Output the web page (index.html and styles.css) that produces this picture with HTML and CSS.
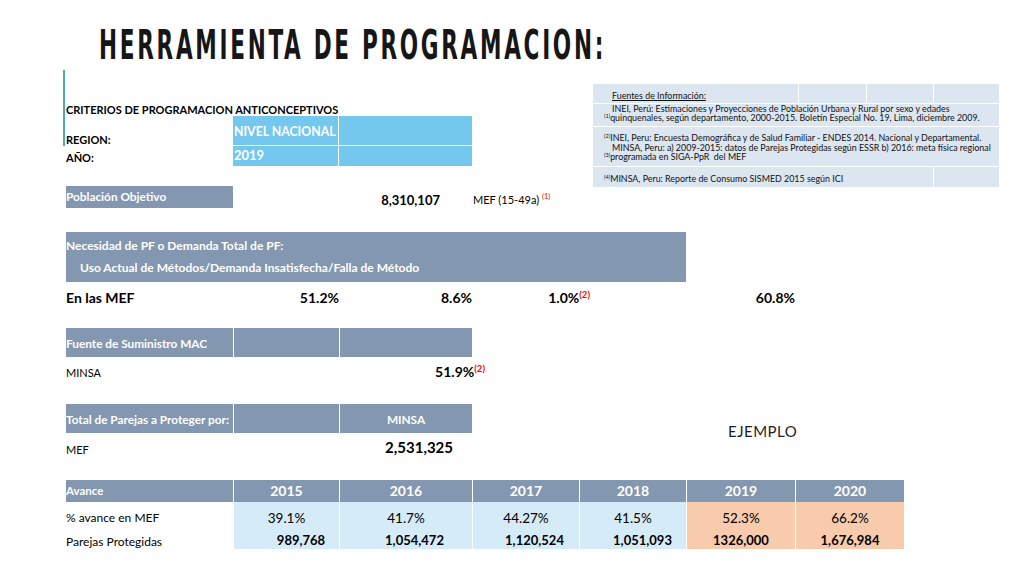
FILE: index.html
```html
<!DOCTYPE html>
<html lang="es">
<head>
<meta charset="utf-8">
<title>Herramienta de Programacion</title>
<link rel="stylesheet" href="styles.css">
</head>
<body>
<div class="slide">
  <header class="title-bar">
    <h1 class="title"><span class="title-text">HERRAMIENTA DE PROGRAMACION:</span></h1>
  </header>

  <div class="top">
    <div class="criteria">
      <div class="criteria-head">CRITERIOS DE PROGRAMACION ANTICONCEPTIVOS</div>
      <div class="region-grid">
        <div class="crit-lbl region-lbl">REGION:</div>
        <div class="blue-cell blue-top blue-first">NIVEL NACIONAL</div>
        <div class="blue-cell blue-top"></div>
        <div class="crit-lbl year-lbl">AÑO:</div>
        <div class="blue-cell blue-first year-val">2019</div>
        <div class="blue-cell"></div>
      </div>
    </div>

    <div class="sources">
      <div class="src-cell src-r1"><span class="src-line ind"><u>Fuentes de Información:</u></span></div>
      <div class="src-cell"></div>
      <div class="src-cell"></div>
      <div class="src-cell"></div>
      <div class="src-cell src-span4 src-r2">
        <div class="src-line ind">INEI, Perú: Estimaciones y Proyecciones de Población Urbana y Rural por sexo y edades</div>
        <div class="src-line"><span class="ssup">(1)</span>quinquenales,  según departamento, 2000-2015. Boletín Especial No. 19, Lima, diciembre 2009.</div>
      </div>
      <div class="src-cell src-span4 src-r3">
        <div class="src-line"><span class="ssup">(2)</span>INEI, Peru: Encuesta Demográfica y de Salud Familiar - ENDES 2014. Nacional y Departamental.</div>
        <div class="src-line ind">MINSA, Peru: a) 2009-2015: datos de Parejas Protegidas según ESSR b) 2016: meta física regional</div>
        <div class="src-line"><span class="ssup">(3)</span>programada en SIGA-PpR&nbsp; del MEF</div>
      </div>
      <div class="src-cell src-span3 src-r4">
        <div class="src-line"><span class="ssup">(4)</span>MINSA, Peru: Reporte de Consumo SISMED 2015 según ICI</div>
      </div>
      <div class="src-cell"></div>
    </div>
  </div>

  <section class="grid row-pob">
    <div class="hd">Población Objetivo</div>
    <div></div>
    <div class="pob-num">8,310,107</div>
    <div class="note">MEF (15-49a) <span class="ref">(1)</span></div>
  </section>

  <section class="grid row-nec">
    <div class="hd nec-box">
      <div class="nec-line">Necesidad de PF o Demanda Total de PF:</div>
      <div class="nec-line nec-indent">Uso Actual de Métodos/Demanda Insatisfecha/Falla de Método</div>
    </div>
  </section>

  <section class="grid row-mef">
    <div class="lbl-big">En las MEF</div>
    <div class="pct">51.2%</div>
    <div class="pct">8.6%</div>
    <div class="pct pct-over">1.0%<span class="ref ref-big">(2)</span></div>
    <div></div>
    <div class="pct">60.8%</div>
  </section>

  <section class="grid row-bar">
    <div class="hd bar-txt">Fuente de Suministro MAC</div>
    <div class="hd sep"></div>
    <div class="hd sep"></div>
  </section>

  <section class="grid row-minsa">
    <div class="lbl minsa-lbl">MINSA</div>
    <div></div>
    <div class="pct minsa-pct">51.9%<span class="ref ref-big ref-out">(2)</span></div>
  </section>

  <section class="grid row-total">
    <div class="hd bar-txt tot-c1">Total de Parejas a Proteger por:</div>
    <div class="hd sep tot-c2"></div>
    <div class="hd sep bar-txt center tot-c3">MINSA</div>
    <div class="ejemplo">EJEMPLO</div>
    <div class="lbl mef-lbl">MEF</div>
    <div class="total-num">2,531,325</div>
  </section>

  <section class="grid tbl">
    <div class="hd tbl-hd">Avance</div>
    <div class="hd sep yr">2015</div>
    <div class="hd sep yr">2016</div>
    <div class="hd sep yr">2017</div>
    <div class="hd sep yr">2018</div>
    <div class="hd sep yr">2019</div>
    <div class="hd sep yr">2020</div>

    <div class="lbl tl1">% avance en MEF</div>
    <div class="v1 fb sep">39.1%</div>
    <div class="v1 fb sep">41.7%</div>
    <div class="v1 fb sep">44.27%</div>
    <div class="v1 fb sep">41.5%</div>
    <div class="v1 fp sep">52.3%</div>
    <div class="v1 fp sep">66.2%</div>

    <div class="lbl tl2">Parejas Protegidas</div>
    <div class="v2 fb sep s15">989,768</div>
    <div class="v2 fb sep s16">1,054,472</div>
    <div class="v2 fb sep s17">1,120,524</div>
    <div class="v2 fb sep s18">1,051,093</div>
    <div class="v2 fp sep">1326,000</div>
    <div class="v2 fp sep">1,676,984</div>
  </section>
</div>
</body>
</html>
```

FILE: styles.css
```css
* { box-sizing: border-box; margin: 0; padding: 0; }

body {
  margin: 0;
  background: #ffffff;
  font-family: "Lato", "Liberation Sans", sans-serif;
  color: #000000;
}

.slide {
  width: 1024px;
  height: 576px;
  overflow: hidden;
  background: #ffffff;
}

/* ---------- title ---------- */
.title-bar {
  height: 70px;
  padding: 25px 0 0 99px;
}
.title {
  font-family: "DejaVu Sans Condensed", "DejaVu Sans", sans-serif;
  font-stretch: condensed;
  font-weight: bold;
  font-size: 40px;
  line-height: 40px;
  color: #161616;
  white-space: nowrap;
}
.title-text {
  display: inline-block;
  letter-spacing: 4.5px;
  transform: scaleX(0.6);
  transform-origin: 0 0;
}

/* ---------- top block ---------- */
.top {
  display: flex;
  align-items: flex-start;
  height: 116px;
}
.criteria {
  position: relative;
  margin-left: 63px;
  width: 409px;
  padding-left: 3px;
}
.criteria::before {
  content: "";
  position: absolute;
  left: 0;
  top: 0;
  width: 2px;
  height: 76px;
  background: #4ea6c6;
}
.criteria-head {
  margin-top: 33px;
  height: 13px;
  font-size: 11px;
  line-height: 13px;
  font-weight: bold;
  white-space: nowrap;
}
.region-grid {
  display: grid;
  grid-template-columns: 167px 106px 133px;
  grid-template-rows: 30px 20px;
}
.crit-lbl {
  font-size: 11px;
  line-height: 13px;
  font-weight: bold;
}
.region-lbl { align-self: end; }
.year-lbl { padding-top: 5px; }

.blue-cell {
  background: #74c8ee;
  color: #ffffff;
  font-weight: bold;
  font-size: 12.3px;
  line-height: 15px;
  padding-left: 1px;
  white-space: nowrap;
  overflow: hidden;
}
.blue-top { border-bottom: 1px solid #ffffff; padding-top: 8px; }
.blue-first { border-right: 1px solid #ffffff; }
.year-val { padding-top: 2px; font-size: 13px; }

/* ---------- sources ---------- */
.sources {
  margin: 14px 0 0 121px;
  width: 403px;
  display: grid;
  grid-template-columns: 205px 67px 66px 65px;
  grid-template-rows: 19px 22px 39px 20px;
  gap: 1px;
  background: #ffffff;
  font-size: 8.9px;
  color: #111111;
}
.src-cell {
  background: #dce6f1;
  padding-left: 11px;
  white-space: nowrap;
}
.src-span4 { grid-column: 1 / 5; }
.src-span3 { grid-column: 1 / 4; }
.src-line { display: block; }
.src-line.ind { padding-left: 8px; }
.src-r1 { padding-top: 7px; line-height: 10px; }
.src-r2 { padding-top: 0; line-height: 9px; }
.src-r3 { padding-top: 6px; line-height: 9.5px; }
.src-r4 { padding-top: 7px; line-height: 10px; }
.ssup {
  font-size: 5.5px;
  vertical-align: 3px;
  line-height: 0;
}

/* ---------- sheet grid ---------- */
.grid {
  display: grid;
  grid-template-columns: 167px 106px 133px 107px 107px 109px 109px;
  margin-left: 66px;
  width: 838px;
}

.hd {
  background: #8497b0;
  color: #ffffff;
  font-weight: bold;
  font-size: 11.8px;
  white-space: nowrap;
  overflow: hidden;
}
.sep { border-left: 1px solid #ffffff; }
.center { text-align: center; }

.lbl {
  font-size: 11px;
  white-space: nowrap;
}

.ref {
  color: #ff0000;
  font-size: 7.5px;
  font-weight: normal;
  vertical-align: 5px;
  line-height: 0;
}
.ref-big {
  font-size: 9.5px;
  font-weight: bold;
  vertical-align: 5px;
}

/* poblacion */
.row-pob { grid-template-rows: 22px; }
.row-pob .hd { line-height: 22px; }
.pob-num {
  font-size: 13px;
  font-weight: bold;
  line-height: 22px;
  padding-top: 3px;
  padding-right: 32px;
  text-align: right;
}
.note {
  font-size: 11px;
  line-height: 22px;
  padding-top: 3px;
  padding-left: 1px;
  white-space: nowrap;
}

/* necesidad */
.row-nec { margin-top: 24px; grid-template-rows: 50px; }
.nec-box {
  grid-column: 1 / 6;
  padding-top: 3px;
  font-size: 12px;
  line-height: 22px;
}
.nec-indent { padding-left: 14px; }

/* en las MEF */
.row-mef { grid-template-rows: 28px; }
.lbl-big {
  font-size: 14px;
  font-weight: bold;
  line-height: 28px;
  padding-top: 2px;
}
.pct {
  font-size: 14px;
  font-weight: bold;
  line-height: 28px;
  padding-top: 2px;
  text-align: right;
  white-space: nowrap;
}
.pct-over { margin-right: -11px; }

/* bars */
.row-bar { margin-top: 18px; grid-template-rows: 29px; }
.bar-txt { line-height: 29px; padding-top: 1px; }

/* minsa */
.row-minsa { grid-template-rows: 30px; }
.minsa-lbl { line-height: 30px; padding-top: 1px; }
.minsa-pct { line-height: 30px; padding-top: 0; }
.ref-out { margin-right: -13px; }

/* total parejas */
.row-total { margin-top: 17px; grid-template-rows: 29px 27px; }
.tot-c1 { grid-column: 1; grid-row: 1; }
.tot-c2 { grid-column: 2; grid-row: 1; }
.tot-c3 { grid-column: 3; grid-row: 1; }
.mef-lbl {
  grid-column: 1;
  grid-row: 2;
  line-height: 27px;
  padding-top: 3px;
}
.total-num {
  grid-column: 3;
  grid-row: 2;
  font-size: 15px;
  font-weight: bold;
  line-height: 27px;
  padding-top: 1px;
  padding-right: 19px;
  text-align: right;
}
.ejemplo {
  grid-column: 6 / 8;
  grid-row: 1 / 3;
  padding-left: 42px;
  padding-top: 18px;
  font-size: 15px;
  line-height: 18px;
  letter-spacing: 0.5px;
  color: #1e1e1e;
}

/* table */
.tbl { margin-top: 20px; grid-template-rows: 22px 26px 21px; }
.tbl-hd { font-size: 11.5px; line-height: 22px; }
.yr { font-size: 14px; line-height: 22px; text-align: center; }
.tl1 { font-size: 12px; line-height: 26px; padding-top: 3px; }
.tl2 { font-size: 12px; line-height: 21px; padding-top: 3px; }
.fb { background: #d5ecf8; }
.fp { background: #f8cbad; }
.v1 {
  font-size: 13.5px;
  line-height: 26px;
  padding-top: 3px;
  text-align: center;
}
.v2 {
  font-size: 13px;
  font-weight: bold;
  line-height: 21px;
  padding-top: 2px;
  text-align: center;
}
.s15 { padding-left: 29px; }
.s16 { padding-left: 17px; }
.s17 { padding-left: 17px; }
.s18 { padding-left: 19px; }
```
